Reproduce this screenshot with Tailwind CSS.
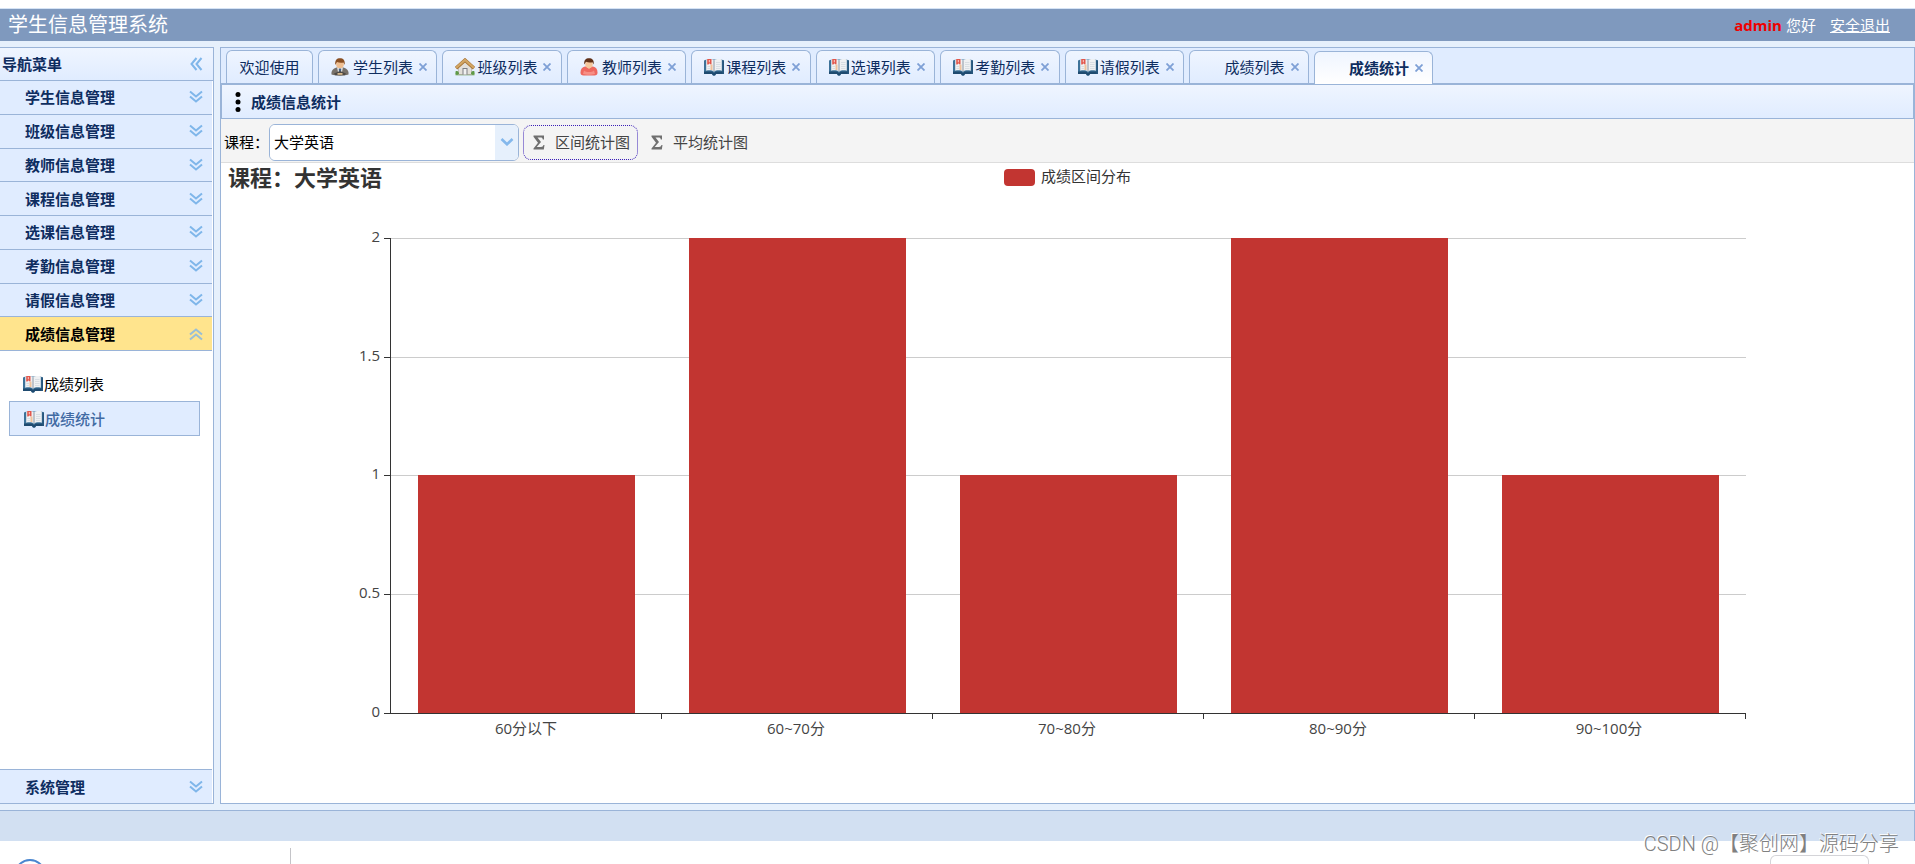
<!DOCTYPE html>
<html lang="zh-CN">
<head>
<meta charset="utf-8">
<title>学生信息管理系统</title>
<script src="https://cdn.jsdelivr.net/npm/@tailwindcss/browser@4"></script>
</head>
<body class="flex min-h-screen flex-col overflow-hidden bg-white font-['Open_Sans','Noto_Sans_CJK_SC',sans-serif] text-[15px] leading-5 text-black">

<svg class="hidden" aria-hidden="true">
  <symbol id="book" viewBox="0 0 20 18">
    <path d="M0 2.500 2.500 1.500h15L20 2.500V16h-8l-1 1.500H9L8 16H0z" fill="#3d7299"/>
    <path d="M0 13.500h8l2 1.500 2-1.500h8V16h-8l-1 1.500H9L8 16H0z" fill="#1f4b70"/>
    <path d="M18.300 2.500H20V16h-1.700z" fill="#27567c"/>
    <path d="M2.200 1.500C5 .7 8 1 10 2.500 12 1 15 .7 17.800 1.500v11.300c-3-.8-6-.5-7.800 1-1.800-1.500-4.800-1.800-7.800-1z" fill="#eff1f3"/>
    <path d="M10 2.500v11" stroke="#8b97a4"/>
    <path d="M12 4.500h4.500M12 6.500h4.500M12 8.500h4.500M12 10.500h4.500" stroke="#cfd5db" stroke-width=".7"/>
    <path d="M6.500 6.500h2V12h-2z" fill="#efc39c"/>
    <path d="M3.500 8.500h2.500M3.500 10.500h2.500" stroke="#cfd5db" stroke-width=".7"/>
    <path d="M3.200 1h4.300v5.200H6.200L5.300 5.200 4.500 6.500H3.200z" fill="#e2574c"/>
    <path d="M5.300 2v2.300" stroke="#fbd0cc"/>
  </symbol>
  <symbol id="student" viewBox="0 0 18 18">
    <path d="M.5 16.500C0 13 2 10.500 5.500 9.500h7c3.500 1 5.500 3.500 5 7-4 1.500-13 1.500-17 0z" fill="#77716a"/>
    <path d="M6 9.500h6L11 14l-2 2-2-2z" fill="#d9dcdf"/>
    <path d="M9 10l1.200 1.200-.6 3.800-.6.800-.6-.8-.6-3.800z" fill="#3f5f88"/>
    <path d="M3 15.500 9 13l6 2.500-1 1.800H4z" fill="#4e4a46"/>
    <path d="M6.500 15h5v1.800h-5z" fill="#d9b98c"/>
    <ellipse cx="9" cy="6" rx="3.900" ry="4.300" fill="#efbe90"/>
    <path d="M4.300 7C3.600 2 6 .2 9 .2S14.400 2 13.700 7L12.500 4.500C10 5 8 4.800 6 4z" fill="#8a4f22"/>
  </symbol>
  <symbol id="teacher" viewBox="0 0 18 18">
    <path d="M.5 14.500C.5 11 2 9.300 5 8.500h8c3 .8 4.500 2.500 4.500 6 0 2.300-1 3-3 3h-11c-2 0-3-.7-3-3z" fill="#ee6860"/>
    <path d="M4 12.500c2 2 8 2 10 0l1 3.500c-3 1-9 1-12 0z" fill="#f78f86"/>
    <path d="M6 8.500h6L9 11z" fill="#f4c69c"/>
    <ellipse cx="9" cy="6" rx="3.800" ry="4" fill="#f4c69c"/>
    <path d="M4.300 6.500C3.600 2 6 .2 9 .2S14.400 2 13.700 6.500L12.500 4.300C10 4.800 8 4.600 6 3.800z" fill="#5f3018"/>
  </symbol>
  <symbol id="house" viewBox="0 0 20 18">
    <path d="M.5 15.500h19v1.800H.5z" fill="#6ea356"/>
    <path d="M3.500 8.500 10 3l6.500 5.500v8h-13z" fill="#e3e0da" stroke="#a8a29a" stroke-width=".6"/>
    <path d="M7.500 10h5v6.500h-5z" fill="#7c7f85"/>
    <path d="M8.500 11h3v5.500h-3z" fill="#f1f1f1"/>
    <path d="M1 10.200 10 2.200l9 8" fill="none" stroke="#a87436" stroke-width="3.600"/>
    <path d="M1.200 9.800 10 2l8.800 7.800" fill="none" stroke="#d3a765" stroke-width="2.200"/>
    <path d="M.5 13.500c2-1 3.500 0 3.500 2.500H.5zM19.500 13.500c-2-1-3.500 0-3.500 2.500h3.500z" fill="#5f9a48"/>
  </symbol>
  <symbol id="down" viewBox="0 0 14 14">
    <path d="M1 1.500 7 6.500l6-5M1 6.500l6 5 6-5" fill="none" stroke="#7fb6ea" stroke-width="2"/>
  </symbol>
  <symbol id="sigma" viewBox="0 0 12 15">
    <path d="M.5.500h10.500v4h-1.200C9.500 3 9 2.500 7.500 2.500H4.500L8 7l-4.300 5H8c1.500 0 2-.7 2.500-2h1l-.7 4.500H.5v-1L5 7.800.5 1.700z" fill="#6f6f6f"/>
  </symbol>
</svg>

<header class="mt-2 flex h-[33px] items-center justify-between border-t border-[#d5e3f5] bg-[#7f99be] pr-[25px] pl-2 text-white">
  <h1 class="text-xl leading-7">学生信息管理系统</h1>
  <div class="flex items-center">
    <strong class="mr-1 font-bold text-[#f00000]">admin</strong><span>您好</span>
    <a href="#" class="ml-3.5 underline">安全退出</a>
  </div>
</header>

<div class="flex flex-1 gap-1.5 bg-[#e6f0fc] py-1.5">
  <aside class="flex w-[214px] shrink-0 flex-col border-y border-r border-[#9ab4d8] bg-white">
    <div class="flex h-[33px] items-center justify-between border-b border-[#9ab4d8] bg-linear-to-b from-[#eff5ff] to-[#e0ecff] pr-2.5 pl-0.5 font-bold text-[#0e2d5f]">
      <h2>导航菜单</h2>
      <button type="button" aria-label="收起导航"><svg class="size-3.5 rotate-90"><use href="#down"/></svg></button>
    </div>
    <nav class="mr-px flex flex-1 flex-col font-bold text-[#0e2d5f]">
      <div class="grid h-[270px] grid-rows-8 *:flex *:items-center *:justify-between *:border-b *:border-[#9ab4d8] *:pr-[9px] *:pl-[25px]">
        <button type="button" class="bg-[#e0ecff]">学生信息管理<svg class="size-3.5"><use href="#down"/></svg></button>
        <button type="button" class="bg-[#e0ecff]">班级信息管理<svg class="size-3.5"><use href="#down"/></svg></button>
        <button type="button" class="bg-[#e0ecff]">教师信息管理<svg class="size-3.5"><use href="#down"/></svg></button>
        <button type="button" class="bg-[#e0ecff]">课程信息管理<svg class="size-3.5"><use href="#down"/></svg></button>
        <button type="button" class="bg-[#e0ecff]">选课信息管理<svg class="size-3.5"><use href="#down"/></svg></button>
        <button type="button" class="bg-[#e0ecff]">考勤信息管理<svg class="size-3.5"><use href="#down"/></svg></button>
        <button type="button" class="bg-[#e0ecff]">请假信息管理<svg class="size-3.5"><use href="#down"/></svg></button>
        <button type="button" class="bg-[#ffe48d] text-black">成绩信息管理<svg class="size-3.5 rotate-180 opacity-80"><use href="#down"/></svg></button>
      </div>
      <ul class="flex-1 pt-4 pr-3 pl-[9px]">
        <li><a href="#" class="flex h-[34px] items-center gap-px pl-3.5 font-normal text-black"><svg class="h-[18px] w-5"><use href="#book"/></svg>成绩列表</a></li>
        <li><a href="#" class="flex h-[35px] items-center gap-px border border-[#9ab4d8] bg-[#e0ecff] pl-3.5 font-medium text-[#416aa3]"><svg class="h-[18px] w-5"><use href="#book"/></svg>成绩统计</a></li>
      </ul>
      <button type="button" class="flex h-[34px] items-center justify-between border-t border-[#9ab4d8] bg-[#e0ecff] pr-[9px] pl-[25px]">系统管理<svg class="size-3.5"><use href="#down"/></svg></button>
    </nav>
  </aside>

  <main class="flex min-w-0 flex-1 flex-col border border-[#9ab4d8] bg-white">
    <div class="flex h-[37px] items-end gap-[5px] border-b-2 border-[#9ab4d8] bg-[#e0ecff] pl-[5px] text-[#0e2d5f]">
      <a href="#" class="flex h-[33px] w-[87px] shrink-0 items-center justify-center rounded-t-md border border-b-0 border-[#9ab4d8] bg-linear-to-b from-[#eff5ff] to-[#e0ecff] pb-px">欢迎使用</a>
      <div class="flex w-[1115px] items-end gap-[5px] *:flex *:h-[33px] *:flex-1 *:items-center *:rounded-t-md *:border *:border-b-0 *:border-[#9ab4d8] *:bg-linear-to-b *:pr-[9px] *:pb-px *:pl-3">
        <div class="from-[#eff5ff] to-[#e0ecff]"><svg class="mr-1 h-[18px] w-[18px] shrink-0"><use href="#student"/></svg><a href="#" class="shrink-0">学生列表</a><button type="button" class="ml-1.5" aria-label="关闭"><svg class="size-2" viewBox="0 0 8 8"><path d="M.5.500l7 7M7.500.500l-7 7" stroke="#7ea0d6" stroke-width="1.800"/></svg></button></div>
        <div class="from-[#eff5ff] to-[#e0ecff]"><svg class="mr-0.5 h-[18px] w-5 shrink-0"><use href="#house"/></svg><a href="#" class="shrink-0">班级列表</a><button type="button" class="ml-1.5" aria-label="关闭"><svg class="size-2" viewBox="0 0 8 8"><path d="M.5.500l7 7M7.500.500l-7 7" stroke="#7ea0d6" stroke-width="1.800"/></svg></button></div>
        <div class="from-[#eff5ff] to-[#e0ecff]"><svg class="mr-1 h-[18px] w-[18px] shrink-0"><use href="#teacher"/></svg><a href="#" class="shrink-0">教师列表</a><button type="button" class="ml-1.5" aria-label="关闭"><svg class="size-2" viewBox="0 0 8 8"><path d="M.5.500l7 7M7.500.500l-7 7" stroke="#7ea0d6" stroke-width="1.800"/></svg></button></div>
        <div class="from-[#eff5ff] to-[#e0ecff]"><svg class="mr-0.5 h-[18px] w-5 shrink-0"><use href="#book"/></svg><a href="#" class="shrink-0">课程列表</a><button type="button" class="ml-1.5" aria-label="关闭"><svg class="size-2" viewBox="0 0 8 8"><path d="M.5.500l7 7M7.500.500l-7 7" stroke="#7ea0d6" stroke-width="1.800"/></svg></button></div>
        <div class="from-[#eff5ff] to-[#e0ecff]"><svg class="mr-0.5 h-[18px] w-5 shrink-0"><use href="#book"/></svg><a href="#" class="shrink-0">选课列表</a><button type="button" class="ml-1.5" aria-label="关闭"><svg class="size-2" viewBox="0 0 8 8"><path d="M.5.500l7 7M7.500.500l-7 7" stroke="#7ea0d6" stroke-width="1.800"/></svg></button></div>
        <div class="from-[#eff5ff] to-[#e0ecff]"><svg class="mr-0.5 h-[18px] w-5 shrink-0"><use href="#book"/></svg><a href="#" class="shrink-0">考勤列表</a><button type="button" class="ml-1.5" aria-label="关闭"><svg class="size-2" viewBox="0 0 8 8"><path d="M.5.500l7 7M7.500.500l-7 7" stroke="#7ea0d6" stroke-width="1.800"/></svg></button></div>
        <div class="from-[#eff5ff] to-[#e0ecff]"><svg class="mr-0.5 h-[18px] w-5 shrink-0"><use href="#book"/></svg><a href="#" class="shrink-0">请假列表</a><button type="button" class="ml-1.5" aria-label="关闭"><svg class="size-2" viewBox="0 0 8 8"><path d="M.5.500l7 7M7.500.500l-7 7" stroke="#7ea0d6" stroke-width="1.800"/></svg></button></div>
        <div class="justify-end from-[#eff5ff] to-[#e0ecff]"><a href="#" class="shrink-0">成绩列表</a><button type="button" class="ml-1.5" aria-label="关闭"><svg class="size-2" viewBox="0 0 8 8"><path d="M.5.500l7 7M7.500.500l-7 7" stroke="#7ea0d6" stroke-width="1.800"/></svg></button></div>
        <div class="-mb-px justify-end from-[#eff5ff] to-white font-bold"><a href="#" class="shrink-0">成绩统计</a><button type="button" class="ml-1.5" aria-label="关闭"><svg class="size-2" viewBox="0 0 8 8"><path d="M.5.500l7 7M7.500.500l-7 7" stroke="#7ea0d6" stroke-width="1.800"/></svg></button></div>
      </div>
    </div>

    <div class="flex h-[34px] items-center gap-2.5 border-x border-b border-[#9ab4d8] bg-linear-to-b from-[#eff5ff] to-[#e0ecff] pl-[13px] font-bold text-[#0e2d5f]">
      <svg class="h-5 w-1.5" viewBox="0 0 6 20" aria-hidden="true"><circle cx="3" cy="2.500" r="2.500"/><circle cx="3" cy="10" r="2.500"/><circle cx="3" cy="17.500" r="2.500"/></svg>
      <h2>成绩信息统计</h2>
    </div>

    <div class="flex h-[44px] items-center border-b border-[#dddddd] bg-[#f4f4f4] pt-[3px] pl-[3px]">
      <label for="course">课程：</label>
      <div class="relative flex h-[37px] w-[250px] overflow-hidden rounded-md border border-[#9ab4d8] bg-white">
        <select id="course" class="w-full appearance-none bg-white pl-1 outline-none">
          <option>大学英语</option>
        </select>
        <span class="pointer-events-none absolute inset-y-0 right-0 flex w-[23px] items-center justify-center bg-[#e6f0fc]">
          <svg class="h-2 w-3.5" viewBox="0 0 14 8"><path d="M1.500 1 7 6.300 12.500 1" fill="none" stroke="#84b8ec" stroke-width="2.600"/></svg>
        </span>
      </div>
      <button type="button" class="ml-1 flex h-[35px] items-center gap-2.5 rounded-lg border border-dotted border-[#3a1fb8] pr-[7px] pl-[9px] text-[#444444]"><svg class="h-[15px] w-3"><use href="#sigma"/></svg>区间统计图</button>
      <button type="button" class="ml-1 flex h-[35px] items-center gap-2.5 rounded-lg px-[9px] text-[#444444]"><svg class="h-[15px] w-3"><use href="#sigma"/></svg>平均统计图</button>
    </div>

    <svg class="w-full font-['Open_Sans','Noto_Sans_CJK_SC',sans-serif] text-[15px]" viewBox="0 0 1693 640" role="img" aria-label="成绩区间分布" fill="#444444">
      <text x="7" y="23" class="text-[22px] font-bold" fill="#333333">课程：大学英语</text>
      <rect x="783" y="6" width="31" height="17" rx="4" fill="#c23531"/>
      <text x="820" y="19" fill="#333333">成绩区间分布</text>
      <path d="M170 75.500H1525M170 194.500H1525M170 312.500H1525M170 431.500H1525" stroke="#cccccc"/>
      <g fill="#c23531">
        <rect x="197" y="312" width="217" height="238"/>
        <rect x="468" y="75" width="217" height="475"/>
        <rect x="739" y="312" width="217" height="238"/>
        <rect x="1010" y="75" width="217" height="475"/>
        <rect x="1281" y="312" width="217" height="238"/>
      </g>
      <path d="M169.500 75V550.500M163 75.500h6.500M163 194.500h6.500M163 312.500h6.500M163 431.500h6.500M163 550.500H1525M440.500 550v6M711.500 550v6M982.500 550v6M1253.500 550v6M1524.500 550v6" fill="none" stroke="#333333"/>
      <g text-anchor="end">
        <text x="159" y="79">2</text>
        <text x="159" y="198">1.5</text>
        <text x="159" y="316">1</text>
        <text x="159" y="435">0.5</text>
        <text x="159" y="554">0</text>
      </g>
      <g text-anchor="middle">
        <text x="305" y="571">60分以下</text>
        <text x="575" y="571">60~70分</text>
        <text x="846" y="571">70~80分</text>
        <text x="1117" y="571">80~90分</text>
        <text x="1388" y="571">90~100分</text>
      </g>
    </svg>
  </main>
</div>

<footer class="relative">
  <div class="h-[31px] border-t border-r border-[#9ab4d8] bg-[#d2e0f2]"></div>
  <div class="flex h-[23px] items-end justify-between overflow-hidden pr-[46px] pl-4">
    <div class="flex items-end">
      <svg class="h-[5px] w-7" viewBox="0 0 28 5" aria-hidden="true"><circle cx="14" cy="16" r="15" fill="none" stroke="#4a86cf" stroke-width="2"/></svg>
      <div class="ml-[246px] h-4 w-px bg-[#c4c4c8]"></div>
    </div>
    <div class="h-[9px] w-[99px] rounded-t-md border border-b-0 border-[#d4d4d8]"></div>
  </div>
  <p class="absolute right-4 bottom-2 font-[Roboto,'Noto_Sans_CJK_SC',sans-serif] text-xl leading-6 font-light text-[#808080] [text-shadow:-1px_-1px_0_#ffffff]">CSDN @【聚创网】源码分享</p>
</footer>
</body>
</html>
